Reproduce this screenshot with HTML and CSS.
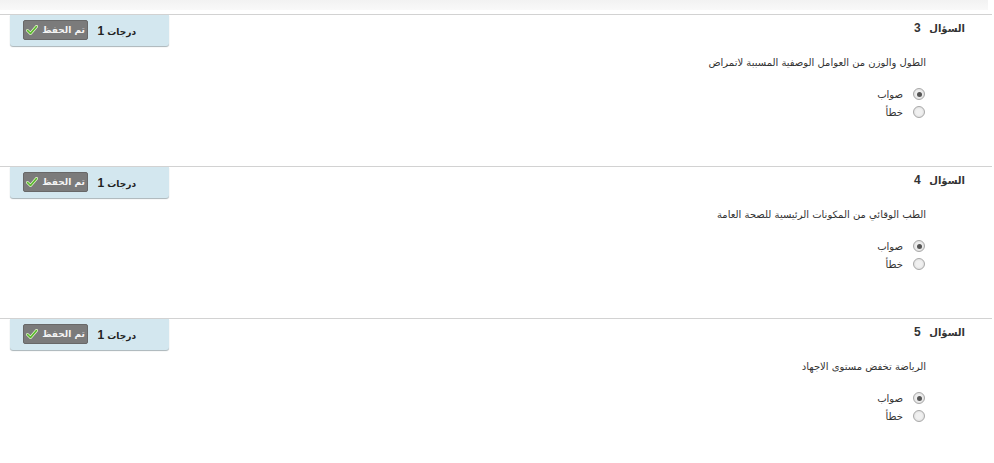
FILE: index.html
```html
<!DOCTYPE html>
<html lang="ar" dir="rtl">

<head>
    <meta charset="UTF-8">
    <title>الاختبار</title>
    <link rel="stylesheet" href="styles.css">
</head>

<body>
    <div class="top-shade"></div>

    <div class="question">
        <div class="q-head">
            <h3 class="q-title">السؤال <span class="q-num">3</span></h3>
            <div class="grade">
                <span class="points">درجات <b>1</b></span>
                <span class="saved">تم الحفظ
                    <svg class="tick" width="12" height="10" viewBox="0 0 12 10"><path d="M1.5 5.5 L4.5 8.5 L10.5 1.5" fill="none" stroke="#e8f5d0" stroke-width="3" stroke-linecap="round" stroke-linejoin="round"/><path d="M1.5 5.5 L4.5 8.5 L10.5 1.5" fill="none" stroke="#56b82a" stroke-width="1.6" stroke-linecap="round" stroke-linejoin="round"/></svg>
                </span>
            </div>
        </div>
        <p class="q-text">الطول والوزن من العوامل الوصفية المسببة لاتمراض</p>
        <ul class="options">
            <li><input type="radio" name="q3" checked> <label>صواب</label></li>
            <li><input type="radio" name="q3"> <label>خطأ</label></li>
        </ul>
    </div>

    <div class="question">
        <div class="q-head">
            <h3 class="q-title">السؤال <span class="q-num">4</span></h3>
            <div class="grade">
                <span class="points">درجات <b>1</b></span>
                <span class="saved">تم الحفظ
                    <svg class="tick" width="12" height="10" viewBox="0 0 12 10"><path d="M1.5 5.5 L4.5 8.5 L10.5 1.5" fill="none" stroke="#e8f5d0" stroke-width="3" stroke-linecap="round" stroke-linejoin="round"/><path d="M1.5 5.5 L4.5 8.5 L10.5 1.5" fill="none" stroke="#56b82a" stroke-width="1.6" stroke-linecap="round" stroke-linejoin="round"/></svg>
                </span>
            </div>
        </div>
        <p class="q-text">الطب الوقائي من المكونات الرئيسية للصحة العامة</p>
        <ul class="options">
            <li><input type="radio" name="q4" checked> <label>صواب</label></li>
            <li><input type="radio" name="q4"> <label>خطأ</label></li>
        </ul>
    </div>

    <div class="question">
        <div class="q-head">
            <h3 class="q-title">السؤال <span class="q-num">5</span></h3>
            <div class="grade">
                <span class="points">درجات <b>1</b></span>
                <span class="saved">تم الحفظ
                    <svg class="tick" width="12" height="10" viewBox="0 0 12 10"><path d="M1.5 5.5 L4.5 8.5 L10.5 1.5" fill="none" stroke="#e8f5d0" stroke-width="3" stroke-linecap="round" stroke-linejoin="round"/><path d="M1.5 5.5 L4.5 8.5 L10.5 1.5" fill="none" stroke="#56b82a" stroke-width="1.6" stroke-linecap="round" stroke-linejoin="round"/></svg>
                </span>
            </div>
        </div>
        <p class="q-text">الرياضة تخفض مستوى الاجهاد</p>
        <ul class="options">
            <li><input type="radio" name="q5" checked> <label>صواب</label></li>
            <li><input type="radio" name="q5"> <label>خطأ</label></li>
        </ul>
    </div>
</body>

</html>
```

FILE: styles.css
```css
/* General */
* {
    margin: 0;
    padding: 0;
    box-sizing: border-box;
}

body {
    background: #fff;
    color: #333;
    font-family: "DejaVu Sans", "Liberation Sans", sans-serif;
    font-size: 10px;
}

.top-shade {
    height: 10px;
    margin-bottom: 4px;
    margin-right: 6px;
    background: linear-gradient(#f2f2f2, #f9f9f9);
}

/* Question block */
.question {
    border-top: 1px solid #d2d2d2;
    height: 152px;
    margin-right: 2px;
}

.q-head {
    display: flex;
    justify-content: space-between;
    align-items: flex-start;
    height: 31px;
}

.q-title {
    font-size: 10px;
    font-weight: bold;
    color: #333;
    padding: 6px 27px 0 0;
    word-spacing: 5px;
}

.q-num {
    font-family: "Liberation Sans", sans-serif;
    font-size: 12px;
}

/* Grade box */
.grade {
    width: 159px;
    height: 31px;
    margin-left: 10px;
    background: #d3e7ef;
    border-radius: 0 0 3px 3px;
    box-shadow: 0 1px 1px #a9b4b8;
    display: flex;
    align-items: center;
    justify-content: space-between;
    padding: 0 33px 0 13px;
}

.points {
    font-weight: bold;
    font-size: 9px;
    color: #222;
}

.points b {
    font-family: "Liberation Sans", sans-serif;
    font-size: 12px;
}

.saved {
    display: flex;
    align-items: center;
    gap: 4px;
    height: 20px;
    width: 65px;
    justify-content: center;
    background: #7b7b7b;
    border: 1px solid #686868;
    border-radius: 2px;
    color: #f4f4f4;
    font-size: 9px;
    font-weight: bold;
    margin-top: -1px;
}

.tick {
    display: block;
}

/* Question text and options */
.q-text {
    font-size: 10px;
    line-height: 14px;
    margin-top: 10px;
    padding-right: 66px;
}

.options {
    list-style: none;
    margin-top: 15px;
    padding-right: 67px;
}

.options li {
    display: flex;
    align-items: center;
    height: 18px;
    gap: 10px;
}

.options label {
    font-size: 10px;
}

.options input {
    appearance: none;
    width: 12px;
    height: 12px;
    border-radius: 50%;
    border: 1px solid #a8a8a8;
    background: radial-gradient(circle, #f0f0f0 40%, #d6d6d6 100%);
    position: relative;
}

.options input:checked::after {
    content: "";
    position: absolute;
    top: 2.5px;
    left: 2.5px;
    width: 5px;
    height: 5px;
    border-radius: 50%;
    background: #555;
}
```
